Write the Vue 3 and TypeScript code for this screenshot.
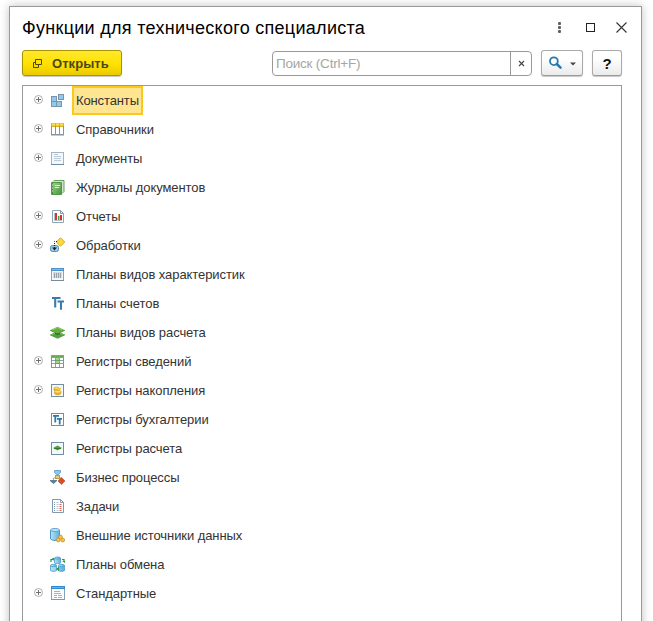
<script setup lang="ts">
interface TreeItem {
  label: string
  icon: string
  expandable?: boolean
}

const items: TreeItem[] = [
  { label: 'Константы', icon: 'constants', expandable: true },
  { label: 'Справочники', icon: 'catalog', expandable: true },
  { label: 'Документы', icon: 'document', expandable: true },
  { label: 'Журналы документов', icon: 'journal' },
  { label: 'Отчеты', icon: 'report', expandable: true },
  { label: 'Обработки', icon: 'processing', expandable: true },
  { label: 'Планы видов характеристик', icon: 'characteristics' },
  { label: 'Планы счетов', icon: 'accounts' },
  { label: 'Планы видов расчета', icon: 'calculation' },
  { label: 'Регистры сведений', icon: 'info', expandable: true },
  { label: 'Регистры накопления', icon: 'accumulation', expandable: true },
  { label: 'Регистры бухгалтерии', icon: 'accounting' },
  { label: 'Регистры расчета', icon: 'calcRegister' },
  { label: 'Бизнес процессы', icon: 'process' },
  { label: 'Задачи', icon: 'task' },
  { label: 'Внешние источники данных', icon: 'external' },
  { label: 'Планы обмена', icon: 'exchange' },
  { label: 'Стандартные', icon: 'standard', expandable: true },
]
</script>

<template>
  <div class="stage">
    <section class="window">
      <header class="titlebar">
        <h1>Функции для технического специалиста</h1>
        <div class="controls">
          <svg width="11" height="13" viewBox="0 0 11 13" fill="#606060">
            <rect x="4" y="1" width="3" height="3" rx="1" /><rect x="4" y="5" width="3" height="3" rx="1" /><rect x="4" y="9" width="3" height="3" rx="1" />
          </svg>
          <svg width="11" height="13" viewBox="0 0 11 13" fill="none" stroke="#222"><rect x="1.5" y="2.5" width="8" height="8" /></svg>
          <svg width="11" height="13" viewBox="0 0 11 13" fill="none" stroke="#333" stroke-width="1.1"><path d="M.5 1.5l10 10M10.5 1.5l-10 10" /></svg>
        </div>
      </header>

      <div class="toolbar">
        <button class="open">
          <svg width="11" height="11" viewBox="0 0 11 11" fill="none" stroke="#4d4818"><path d="M3.5 1.5h6v5h-6zM3.5 4.5h-2v5h5v-3" /></svg>
          <span>Открыть</span>
        </button>
        <div class="search">
          <span class="placeholder">Поиск (Ctrl+F)</span>
          <span class="clear"><svg width="7" height="7" viewBox="0 0 7 7" stroke="#444" stroke-width="1.1"><path d="M1 1l5 5M6 1l-5 5" /></svg></span>
        </div>
        <button class="find">
          <svg width="14" height="14" viewBox="0 0 14 14" fill="none" stroke="#2878b0"><circle cx="5.9" cy="5.2" r="3.9" stroke-width="1.8" /><path d="M8.8 8l3.7 3.7" stroke-width="2.5" stroke-linecap="round" /></svg>
          <svg class="caret" width="6" height="4" viewBox="0 0 6 4"><path d="M0 .5h6L3 3.5z" fill="#444" /></svg>
        </button>
        <button class="help">?</button>
      </div>

      <ul class="tree">
        <li v-for="(item, index) in items" :key="item.label" :class="{ selected: index === 0 }">
          <span class="expander">
            <svg v-if="item.expandable" width="9" height="9" viewBox="0 0 9 9" fill="none"><circle cx="4.5" cy="4.5" r="4" stroke="#a3a3a3" stroke-width=".9" /><path d="M2 4.5h5M4.5 2v5" stroke="#707070" /></svg>
          </span>
          <svg class="icon" width="17" height="17" viewBox="0 0 17 17" fill="none">
            <g v-if="item.icon === 'constants'" fill="#92c9ec" stroke="#7895ab">
              <rect x="9.5" y="2.5" width="5" height="5" /><rect x="2.5" y="4.5" width="5" height="5" /><rect x="2.5" y="9.5" width="5" height="5" /><rect x="7.5" y="9.5" width="5" height="5" />
            </g>
            <g v-else-if="item.icon === 'catalog'">
              <rect x="2.5" y="3" width="12" height="11" fill="#fff" stroke="#8799a8" />
              <path d="M2 2h13v4H2z" fill="#d9b733" /><path d="M3 3.5h3M7 3.5h3M11 3.5h3" stroke="#ffe04a" stroke-width="2" />
              <path d="M2.5 5v9M6.5 5v9M10.5 5v9M14.5 5v9M2 13.5h13" stroke="#8496a5" />
            </g>
            <g v-else-if="item.icon === 'document'">
              <rect x="2.5" y="2.5" width="12" height="12" fill="#f3f8fc" stroke="#a2b5c4" />
              <path d="M5 4.5h4M5 6.5h7M5 8.5h7M5 10.5h7" stroke="#bdcbd6" /><path d="M2 14.5h13" stroke="#71899f" />
            </g>
            <g v-else-if="item.icon === 'journal'">
              <path d="M4 2.5l1-1h10v11l-2 2" fill="#d2e4cd" stroke="#65a05c" /><path d="M2.5 3.5h10v12h-10z" fill="url(#bookGreen)" stroke="#579450" />
              <path d="M3.5 4v11" stroke="#4a8a47" /><path d="M6 6.5h5M6 8.5h4" stroke="#d9efcf" /><path d="M3 6h1M3 9h1M3 12h1" stroke="#d5eecf" />
            </g>
            <g v-else-if="item.icon === 'report'">
              <path d="M3.5 2.5h8l3 3v9h-11z" fill="#fbfdff" stroke="#93a4b3" /><path d="M11.5 2.5v3h3" stroke="#8195a7" />
              <path d="M5.5 5v7.5H13" stroke="#b5c1cb" /><path d="M6 5h2v7H6zM11 7h2v5h-2z" fill="#dd2f35" /><path d="M9 8h1.5v4H9z" fill="#43a64b" />
            </g>
            <g v-else-if="item.icon === 'processing'">
              <path d="M11.5.8L15.7 5l-4.2 4.2L7.3 5z" fill="#ffd83d" stroke="#d0aa27" />
              <rect x="1.5" y="8.5" width="8" height="6" rx="2" fill="#9bcde9" stroke="#5c8aaa" />
              <path d="M8 4.5H5.5V11" stroke="#222" stroke-dasharray="1 1" /><path d="M3 10.5h5l-2.5 3z" fill="#222" />
            </g>
            <g v-else-if="item.icon === 'characteristics'">
              <rect x="2.5" y="2.5" width="12" height="12" fill="#f5f7f8" stroke="#8fa2b2" /><path d="M2 2h13v3H2z" fill="#4e91c8" /><path d="M3 3.5h11" stroke="#83b9e0" />
              <rect x="4" y="6" width="9" height="6" fill="#d5dade" /><path d="M5.5 7v5M7.5 7v5M9.5 7v5M11.5 7v5" stroke="#98a3ac" /><path d="M2 14.5h13" stroke="#778b9d" />
            </g>
            <path v-else-if="item.icon === 'accounts'" d="M3 3h8.5M6.2 3v9.5M8.5 6.5H15M12 6.5v8.3" stroke="#397da8" stroke-width="2.1" />
            <g v-else-if="item.icon === 'calculation'">
              <path d="M1 10.8L8.5 7.3l7.5 3.5-7.5 3.5z" fill="#55a337" />
              <path d="M3 9h11l-5.5 2z" fill="#276c22" />
              <path d="M1 6.3l7.5-3.5L16 6.3 8.5 9.8z" fill="#62ae3e" />
              <path d="M1 6.3l7.5 3.5L16 6.3M1 10.8l7.5 3.5 7.5-3.5" stroke="#3a862c" stroke-width=".7" />
              <path d="M4 5.7l4.5-2.1L13 5.7M3 10.5l3-1.2M14 10.5l-3-1.2" stroke="#a2d877" stroke-width=".7" />
            </g>
            <g v-else-if="item.icon === 'info'">
              <rect x="2.5" y="2.5" width="12" height="12" fill="#fff" stroke="#8094a4" /><path d="M2 2h13v3H2z" fill="#74b45b" /><path d="M7 5h4v6H7z" fill="#a1d487" />
              <path d="M3 7.5h11M3 10.5h11M6.5 5v9M10.5 5v9" stroke="#8b9eac" /><path d="M3 3.5h3M7 3.5h3M11 3.5h3M6 7.5h5M6 10.5h5" stroke="#66a951" />
            </g>
            <g v-else-if="item.icon === 'accumulation'">
              <rect x="2.5" y="2.5" width="12" height="12" fill="#f4f8fb" stroke="#758da0" />
              <path d="M5.5 9.8v1.8c1.5 1.7 5 1.7 6.5 0V9.8M5 6.2v2c1.5 1.5 4.5 1.5 6 0v-2" fill="#eab72b" stroke="#d49a24" stroke-width=".7" />
              <ellipse cx="8.7" cy="9.7" rx="3.3" ry="1.4" fill="#ffe266" stroke="#d49a24" stroke-width=".6" /><ellipse cx="7.5" cy="6.2" rx="2.6" ry="1.2" fill="#ffdc57" stroke="#d49a24" stroke-width=".6" /><path d="M9 8l3-2" stroke="#f6cd45" stroke-width="1.5" />
            </g>
            <g v-else-if="item.icon === 'accounting'">
              <rect x="2.5" y="2.5" width="12" height="12" fill="#fff" stroke="#758da0" /><path d="M4 4.8h6M6.3 5v6.5M8 7.8h5M10.7 8v5.5" stroke="#3279a6" stroke-width="1.8" />
            </g>
            <g v-else-if="item.icon === 'calcRegister'">
              <rect x="2.5" y="2.5" width="12" height="12" fill="#f3f8fb" stroke="#758da0" /><path d="M4 8L8.5 5.5 13 8l-4.5 2.5z" fill="#54a03a" /><path d="M5 8.5h7" stroke="#327b2b" />
            </g>
            <g v-else-if="item.icon === 'process'">
              <path d="M8.5 5v3M4.5 12V9h8v3" stroke="#9aabb8" /><path d="M5.5 1.5h6v2l-2 2h-2l-2-2z" fill="#8dc9ef" stroke="#6ea6ca" />
              <rect x="6.5" y="6.5" width="4" height="3" fill="#edcb62" stroke="#b99b4f" /><path d="M1 11h7v1l-3.5 3L1 12z" fill="#607f9a" /><path d="M12.5 8.5L16 12l-3.5 3.5L9 12z" fill="#dc4d24" stroke="#b84826" stroke-width=".6" />
            </g>
            <g v-else-if="item.icon === 'task'">
              <path d="M3.5 1.5h8l3 3v10h-11z" fill="#fcfdff" stroke="#8598a9" /><path d="M11.5 1.5v3h3" stroke="#8598a9" />
              <path d="M5.5 4v9" stroke="#7997b3" stroke-dasharray="1 1" /><path d="M8.5 4v9" stroke="#bac5cf" stroke-width="2" stroke-dasharray="1 1" /><path d="M11.5 6v7" stroke="#e76858" stroke-width="2" stroke-dasharray="1 1" />
            </g>
            <g v-else-if="item.icon === 'external'">
              <path d="M1.5 3v9c2 2 7 2 9 0V3" fill="url(#databaseBlue)" stroke="#4f97c4" /><ellipse cx="6" cy="3" rx="4.5" ry="1.6" fill="#b6e3fa" stroke="#4b97c5" stroke-width=".8" />
              <g fill="#f4c548" stroke="#c4902f" stroke-width=".8"><circle cx="11.5" cy="10" r="1.9" /><circle cx="9.3" cy="13" r="1.9" /><circle cx="13.7" cy="13" r="1.9" /></g>
            </g>
            <g v-else-if="item.icon === 'exchange'">
              <g fill="url(#databaseBlue)" stroke="#4999c8" stroke-width=".8"><path d="M5.5 2v5c1.5 1 4.5 1 6 0V2" /><ellipse cx="8.5" cy="2" rx="3" ry="1" /><path d="M1.5 9.5v5c1.5 1.2 4.5 1.2 6 0v-5M9.5 9.5v5c1.5 1.2 4.5 1.2 6 0v-5" /><ellipse cx="4.5" cy="9.5" rx="3" ry="1.2" /><ellipse cx="12.5" cy="9.5" rx="3" ry="1.2" /></g>
              <path d="M2 6V3.5h2M13 3.5h2V6" stroke="#219c36" stroke-width="1.2" /><path d="M3 2h2v3zM13 5h3v2zM10 11v4l-3-2z" fill="#219c36" />
            </g>
            <g v-else>
              <rect x="2.5" y="2.5" width="13" height="12" fill="#fbfcfd" stroke="#8ba1b3" /><path d="M2 1h14v3H2z" fill="#328bd1" /><path d="M3 2.5h12" stroke="#60b4ed" />
              <path d="M5 6.5h6M5 8.5h7M5 10.5h3M9 10.5h4M5 12.5h3M9 12.5h4" stroke="#aab2b8" /><path d="M2 14.5h14" stroke="#8298aa" />
            </g>
          </svg>
          <span class="label">{{ item.label }}</span>
        </li>
      </ul>
    </section>
    <svg class="definitions" width="0" height="0">
      <defs>
        <linearGradient id="bookGreen" x2="1" y2="1"><stop stop-color="#a4d58c" /><stop offset="1" stop-color="#45933b" /></linearGradient>
        <linearGradient id="databaseBlue"><stop stop-color="#b9e3f9" /><stop offset="1" stop-color="#5aafdf" /></linearGradient>
      </defs>
    </svg>
  </div>
</template>

<style>
body { margin: 0; overflow: hidden; }
</style>

<style scoped>
* { box-sizing: border-box; }
.stage { width: 653px; height: 621px; padding: 6px 11px 0 9px; overflow: hidden; background: #fff; font-family: "Liberation Sans", Arial, sans-serif; }
.window { height: 630px; padding: 0 19px 0 12px; border: 1px solid #999; background: #fff; box-shadow: 0 0 9px rgba(0, 0, 0, .25); }
.titlebar { display: flex; align-items: center; height: 43px; }
h1 { margin: 0; padding-bottom: 2px; color: #000; font-size: 18px; font-weight: 400; line-height: 24px; letter-spacing: .29px; white-space: nowrap; }
.controls { display: flex; gap: 20px; margin-left: auto; margin-right: -5px; padding-bottom: 2px; }
.controls svg { display: block; }
.toolbar { display: flex; height: 35px; align-items: flex-start; }
button { display: flex; align-items: center; justify-content: center; height: 26px; margin: 0; padding: 0; border: 1px solid #aaa; border-bottom-color: #999; border-radius: 3px; background: linear-gradient(#fff 30%, #ebebeb); box-shadow: 0 1px 1px rgba(0, 0, 0, .22); font-family: inherit; }
.open { width: 100px; gap: 9px; justify-content: flex-start; padding-left: 9px; border-color: #a99300; background: linear-gradient(#ffe92e, #ffe000 55%, #e9cb00); color: #4b461b; font-size: 13px; font-weight: 700; letter-spacing: .05px; }
.search { display: flex; width: 260px; height: 25px; margin: 1px 0 0 150px; border: 1px solid #999; border-radius: 4px; }
.placeholder { flex: 1; padding-left: 3px; color: #a5a5a5; font-size: 13.5px; line-height: 23px; letter-spacing: -.22px; }
.clear { display: flex; width: 21px; align-items: center; justify-content: center; border-left: 1px solid #999; }
.find { width: 42px; gap: 8px; margin-left: 9px; }
.caret { margin-top: 2px; }
.help { width: 30px; margin-left: 9px; color: #111; font-size: 15px; font-weight: 700; }
.tree { width: 600px; height: 560px; margin: 0; padding: 0; border: 1px solid #999; list-style: none; }
li { display: flex; height: 29px; padding-left: 11px; align-items: flex-start; }
.expander { width: 15px; height: 9px; padding-top: 9px; }
.expander svg { display: block; }
.icon { flex: none; margin-top: 6px; }
.label { height: 29px; margin-left: 6px; padding: 0 3px 0 4px; color: #333; font-size: 13px; line-height: 30px; letter-spacing: -.08px; white-space: nowrap; }
.selected .label { padding: 0 2px; border: 2px solid #fac81e; background: #ffe590; line-height: 26px; letter-spacing: -.12px; }
.definitions { display: block; }
</style>
